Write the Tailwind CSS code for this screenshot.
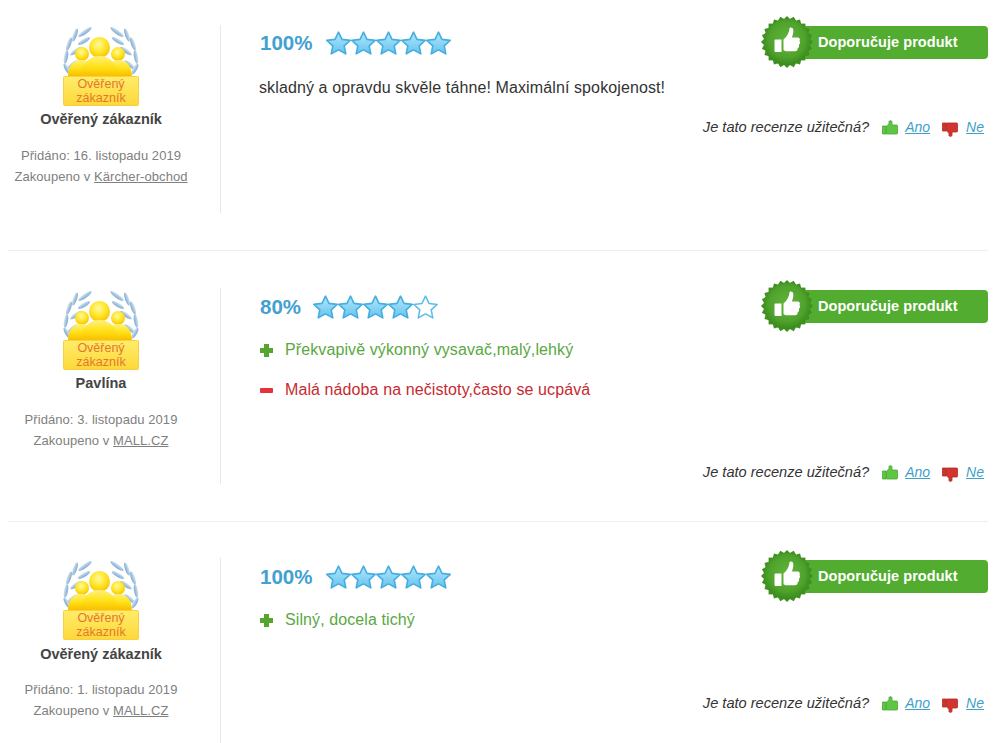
<!DOCTYPE html>
<html lang="cs">
<head>
<meta charset="utf-8">
<script src="https://cdn.jsdelivr.net/npm/@tailwindcss/browser@4"></script>
</head>
<body class="bg-white overflow-hidden h-[743px] font-['Liberation_Sans',Arial,sans-serif]">
<svg class="absolute w-0 h-0" aria-hidden="true">
  <defs>
    <linearGradient id="starG" x1="0" y1="0" x2="0" y2="1"><stop offset="0" stop-color="#b5e8fc"/><stop offset="1" stop-color="#62c3ee"/></linearGradient>
    <radialGradient id="sealG" cx="0.5" cy="0.45" r="0.55"><stop offset="0" stop-color="#62b53a"/><stop offset="0.7" stop-color="#4fa32c"/><stop offset="1" stop-color="#3a8a1d"/></radialGradient>
    <radialGradient id="headG" cx="0.45" cy="0.35" r="0.75"><stop offset="0" stop-color="#fff9a0"/><stop offset="0.5" stop-color="#ffe524"/><stop offset="1" stop-color="#f6b400"/></radialGradient>
    <linearGradient id="bodyG" x1="0" y1="0" x2="0" y2="1"><stop offset="0" stop-color="#fff27a"/><stop offset="0.5" stop-color="#ffe014"/><stop offset="1" stop-color="#f8b800"/></linearGradient>
    <linearGradient id="plateG" x1="0" y1="0" x2="0" y2="1"><stop offset="0" stop-color="#ffec6a"/><stop offset="1" stop-color="#fdd83a"/></linearGradient>
    <linearGradient id="leafG" x1="0" y1="0" x2="0" y2="1"><stop offset="0" stop-color="#d3e4f3"/><stop offset="1" stop-color="#7ea9cd"/></linearGradient>
    <symbol id="star" viewBox="0.5 0.500 25 24"><path d="M13 1.600l3.500 7.300 8.200 1-6 5.500 1.600 8-7.300-4-7.300 4 1.600-8-6-5.500 8.200-1z" fill="url(#starG)" stroke="#45addf" stroke-width="1.600" stroke-linejoin="round"/></symbol>
    <symbol id="starE" viewBox="0.5 0.500 25 24"><path d="M13 1.600l3.500 7.300 8.200 1-6 5.500 1.600 8-7.300-4-7.300 4 1.600-8-6-5.500 8.200-1z" fill="#fff" stroke="#5cbce8" stroke-width="1.500" stroke-linejoin="round"/></symbol>
    <symbol id="seal" viewBox="0 0 52 52">
      <g fill="#3f9020">
        <rect x="7.600" y="7.600" width="36.800" height="36.800"/>
        <rect x="7.600" y="7.600" width="36.800" height="36.800" transform="rotate(15 26 26)"/>
        <rect x="7.600" y="7.600" width="36.800" height="36.800" transform="rotate(30 26 26)"/>
        <rect x="7.600" y="7.600" width="36.800" height="36.800" transform="rotate(45 26 26)"/>
        <rect x="7.600" y="7.600" width="36.800" height="36.800" transform="rotate(60 26 26)"/>
        <rect x="7.600" y="7.600" width="36.800" height="36.800" transform="rotate(75 26 26)"/>
      </g>
      <circle cx="26" cy="26" r="23" fill="url(#sealG)"/>
      <path d="M14.500 23.500h6v12.500h-6a1 1 0 0 1-1-1v-10.500a1 1 0 0 1 1-1zM22.500 23.500c3-2.500 5.500-6 6-11 .2-1.500 3.500-1.200 3.800 1.500.3 2.700-.8 5.500-1.300 7.500h5.500c2.300 0 2.800 2.200 2 3.500.9 1.300.5 3-.6 3.700.6 1.400 0 2.900-1.200 3.500.2 1.900-1 3-2.800 3H26c-1.500 0-2.700-.5-3.500-1z" fill="#fff"/>
    </symbol>
    <symbol id="up" viewBox="0 0 16 15"><path d="M.5 6H4v8H.5zM4.500 6 7 4V1.500C7 .5 10 0 10 2v3h4.500c.8 0 1 .5 1 1v7c0 .7-.4 1-1 1h-10z" fill="#5ec545" stroke="#49ab30" stroke-width=".8"/></symbol>
    <symbol id="down" viewBox="0 0 16 15"><path d="M.5 1H4v8H.5zM4.500 9 7 11v2.500c0 1 3 1.500 3-.5v-3h4.500c.8 0 1-.5 1-1V2c0-.7-.4-1-1-1h-10z" fill="#d2352f" stroke="#b32a25" stroke-width=".8"/></symbol>
    <g id="laurel" fill="url(#leafG)">
      <ellipse cx="22" cy="5" rx="8" ry="2" transform="rotate(-35 22 5)"/>
      <ellipse cx="12" cy="8" rx="7" ry="2" transform="rotate(-70 12 8)"/>
      <ellipse cx="21" cy="14" rx="7" ry="2" transform="rotate(-30 21 14)"/>
      <ellipse cx="6" cy="17" rx="7" ry="2" transform="rotate(-70 6 17)"/>
      <ellipse cx="13" cy="24" rx="7" ry="2" transform="rotate(-35 13 24)"/>
      <ellipse cx="3" cy="30" rx="7" ry="2" transform="rotate(-80 3 30)"/>
      <ellipse cx="9" cy="38" rx="7" ry="2" transform="rotate(-40 9 38)"/>
      <ellipse cx="4" cy="42" rx="6" ry="2" transform="rotate(60 4 42)"/>
    </g>
    <symbol id="badge" viewBox="0 0 76 79">
      <use href="#laurel"/>
      <use href="#laurel" transform="matrix(-1 0 0 1 76 0)"/>
      <circle cx="19" cy="27" r="7" fill="url(#headG)"/>
      <circle cx="55" cy="27" r="7" fill="url(#headG)"/>
      <path d="M5 50c0-11 5-17 13-17s13 6 13 17zM43 50c0-11 5-17 13-17s13 6 13 17z" fill="url(#bodyG)"/>
      <circle cx="36.500" cy="20.500" r="10.500" fill="url(#headG)"/>
      <path d="M18 51c0-14 8-22 18.500-22S55 37 55 51z" fill="url(#bodyG)"/>
      <rect x=".5" y="49.500" width="75" height="29" rx="1" fill="url(#plateG)" stroke="#f9d040"/>
    </symbol>
  </defs>
</svg>

<main class="pl-2 pr-[17px]">

  <article class="flex pt-[25px] pb-[37px] border-b border-[#eeeeee]">
    <aside class="w-[213px] h-[188px] shrink-0 pr-[26px] border-r border-[#e8e8e8] text-center flex flex-col items-center">
      <div class="relative w-[76px] h-[79px] mt-[2px]">
        <svg class="w-[76px] h-[79px]"><use href="#badge"/></svg>
        <span class="absolute left-0 right-0 top-[50px] text-[12.500px] leading-[14px] text-[#e5762f]">Ověřený<br>zákazník</span>
      </div>
      <div class="mt-[3px] text-[14.500px] leading-5 font-bold text-[#444444]">Ověřený zákazník</div>
      <div class="mt-[16px] text-[13px] tracking-[0.07px] leading-[21px] text-[#808080] whitespace-nowrap">Přidáno: 16. listopadu 2019<br>Zakoupeno v <span class="underline">Kärcher-obchod</span></div>
    </aside>
    <div class="flex-1 flex flex-col pl-[39px]">
      <div class="flex justify-between h-[34px] mt-[1px]">
        <div class="flex items-center h-[34px]">
          <span class="text-[20.500px] font-bold text-[#42a1cf] mr-[14px]">100%</span>
          <svg class="w-[25px] h-6"><use href="#star"/></svg><svg class="w-[25px] h-6"><use href="#star"/></svg><svg class="w-[25px] h-6"><use href="#star"/></svg><svg class="w-[25px] h-6"><use href="#star"/></svg><svg class="w-[25px] h-6"><use href="#star"/></svg>
        </div>
        <div class="relative w-[203px] h-[33px] ml-auto">
          <svg class="absolute left-[-24px] top-[-10px] w-[52px] h-[52px]"><use href="#seal"/></svg>
          <div class="h-[33px] bg-[#52ac30] rounded-[4px] pl-[33px] text-[14.500px] tracking-[0.06px] leading-[32px] font-bold text-white">Doporučuje produkt</div>
        </div>
      </div>
      <p class="mt-[16px] -ml-px text-[16px] tracking-[0.11px] leading-6 text-[#333333]">skladný a opravdu skvěle táhne! Maximální spokojenost!</p>
      <div class="mt-[17px] pr-[4px] flex justify-end items-center text-[14px] leading-5 italic text-[#333333]">
        <span class="text-[14.600px] mr-[1px]">Je tato recenze užitečná?</span>
        <svg class="w-[16px] h-[15px] ml-[12px]"><use href="#up"/></svg>
        <span class="ml-[7px] text-[#3f9fc9] underline">Ano</span>
        <svg class="w-[16px] h-[15px] ml-[12px] mt-[4px]"><use href="#down"/></svg>
        <span class="ml-[8px] text-[#3f9fc9] underline">Ne</span>
      </div>
    </div>
  </article>

  <article class="flex pt-[37px] pb-[37px] border-b border-[#eeeeee]">
    <aside class="w-[213px] h-[196px] shrink-0 pr-[26px] border-r border-[#e8e8e8] text-center flex flex-col items-center">
      <div class="relative w-[76px] h-[79px] mt-[3px]">
        <svg class="w-[76px] h-[79px]"><use href="#badge"/></svg>
        <span class="absolute left-0 right-0 top-[50px] text-[12.500px] leading-[14px] text-[#e5762f]">Ověřený<br>zákazník</span>
      </div>
      <div class="mt-[3px] text-[14.500px] leading-5 font-bold text-[#444444]">Pavlína</div>
      <div class="mt-[16px] text-[13px] tracking-[0.07px] leading-[21px] text-[#808080] whitespace-nowrap">Přidáno: 3. listopadu 2019<br>Zakoupeno v <span class="underline">MALL.CZ</span></div>
    </aside>
    <div class="flex-1 flex flex-col pl-[39px]">
      <div class="flex justify-between h-[34px] mt-[2px]">
        <div class="flex items-center h-[34px]">
          <span class="text-[20.500px] font-bold text-[#42a1cf] mr-[12px]">80%</span>
          <svg class="w-[25px] h-6"><use href="#star"/></svg><svg class="w-[25px] h-6"><use href="#star"/></svg><svg class="w-[25px] h-6"><use href="#star"/></svg><svg class="w-[25px] h-6"><use href="#star"/></svg><svg class="w-[25px] h-6"><use href="#starE"/></svg>
        </div>
        <div class="relative w-[203px] h-[33px] ml-auto">
          <svg class="absolute left-[-24px] top-[-10px] w-[52px] h-[52px]"><use href="#seal"/></svg>
          <div class="h-[33px] bg-[#52ac30] rounded-[4px] pl-[33px] text-[14.500px] tracking-[0.06px] leading-[32px] font-bold text-white">Doporučuje produkt</div>
        </div>
      </div>
      <ul class="mt-[14px] flex flex-col gap-[16px] text-[16px] tracking-[0.1px] leading-6">
        <li class="flex items-center text-[#5aa842]"><span class="relative w-[13px] h-[13px] mr-[12px]"><span class="absolute left-[4px] top-0 w-[5px] h-[13px] bg-[#55a52f]"></span><span class="absolute left-0 top-[4px] w-[13px] h-[5px] bg-[#55a52f]"></span></span>Překvapivě výkonný vysavač,malý,lehký</li>
        <li class="flex items-center text-[#c8292f]"><span class="w-[13px] h-[5px] bg-[#e5323a] rounded-[1px] mr-[12px]"></span>Malá nádoba na nečistoty,často se ucpává</li>
      </ul>
      <div class="mt-[60px] pr-[4px] flex justify-end items-center text-[14px] leading-5 italic text-[#333333]">
        <span class="text-[14.600px] mr-[1px]">Je tato recenze užitečná?</span>
        <svg class="w-[16px] h-[15px] ml-[12px]"><use href="#up"/></svg>
        <span class="ml-[7px] text-[#3f9fc9] underline">Ano</span>
        <svg class="w-[16px] h-[15px] ml-[12px] mt-[4px]"><use href="#down"/></svg>
        <span class="ml-[8px] text-[#3f9fc9] underline">Ne</span>
      </div>
    </div>
  </article>

  <article class="flex pt-[36px]">
    <aside class="w-[213px] h-[190px] shrink-0 pr-[26px] border-r border-[#e8e8e8] text-center flex flex-col items-center">
      <div class="relative w-[76px] h-[79px] mt-[3px]">
        <svg class="w-[76px] h-[79px]"><use href="#badge"/></svg>
        <span class="absolute left-0 right-0 top-[50px] text-[12.500px] leading-[14px] text-[#e5762f]">Ověřený<br>zákazník</span>
      </div>
      <div class="mt-[4px] text-[14.500px] leading-5 font-bold text-[#444444]">Ověřený zákazník</div>
      <div class="mt-[15px] text-[13px] tracking-[0.07px] leading-[21px] text-[#808080] whitespace-nowrap">Přidáno: 1. listopadu 2019<br>Zakoupeno v <span class="underline">MALL.CZ</span></div>
    </aside>
    <div class="flex-1 flex flex-col pl-[39px]">
      <div class="flex justify-between h-[34px] mt-[2px]">
        <div class="flex items-center h-[34px]">
          <span class="text-[20.500px] font-bold text-[#42a1cf] mr-[14px]">100%</span>
          <svg class="w-[25px] h-6"><use href="#star"/></svg><svg class="w-[25px] h-6"><use href="#star"/></svg><svg class="w-[25px] h-6"><use href="#star"/></svg><svg class="w-[25px] h-6"><use href="#star"/></svg><svg class="w-[25px] h-6"><use href="#star"/></svg>
        </div>
        <div class="relative w-[203px] h-[33px] ml-auto">
          <svg class="absolute left-[-24px] top-[-10px] w-[52px] h-[52px]"><use href="#seal"/></svg>
          <div class="h-[33px] bg-[#52ac30] rounded-[4px] pl-[33px] text-[14.500px] tracking-[0.06px] leading-[33px] font-bold text-white">Doporučuje produkt</div>
        </div>
      </div>
      <ul class="mt-[14px] text-[16px] tracking-[0.1px] leading-6">
        <li class="flex items-center text-[#5aa842]"><span class="relative w-[13px] h-[13px] mr-[12px]"><span class="absolute left-[4px] top-0 w-[5px] h-[13px] bg-[#55a52f]"></span><span class="absolute left-0 top-[4px] w-[13px] h-[5px] bg-[#55a52f]"></span></span>Silný, docela tichý</li>
      </ul>
      <div class="mt-[61px] pr-[4px] flex justify-end items-center text-[14px] leading-5 italic text-[#333333]">
        <span class="text-[14.600px] mr-[1px]">Je tato recenze užitečná?</span>
        <svg class="w-[16px] h-[15px] ml-[12px]"><use href="#up"/></svg>
        <span class="ml-[7px] text-[#3f9fc9] underline">Ano</span>
        <svg class="w-[16px] h-[15px] ml-[12px] mt-[4px]"><use href="#down"/></svg>
        <span class="ml-[8px] text-[#3f9fc9] underline">Ne</span>
      </div>
    </div>
  </article>

</main>
</body>
</html>
